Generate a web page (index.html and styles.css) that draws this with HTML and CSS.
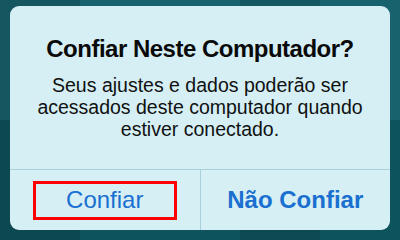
FILE: index.html
```html
<!DOCTYPE html>
<html>
<head>
<meta charset="utf-8">
<link rel="stylesheet" href="styles.css">
</head>
<body>
<div class="dialog">
  <div class="content">
    <div class="title">Confiar Neste Computador?</div>
    <div class="message">Seus ajustes e dados poderão ser acessados deste computador quando estiver conectado.</div>
  </div>
  <div class="buttons">
    <div class="btn"><span class="highlight">Confiar</span></div>
    <div class="btn bold">Não Confiar</div>
  </div>
</div>
</body>
</html>
```
FILE: styles.css
```css
html, body {
  margin: 0;
  width: 400px;
  height: 240px;
  overflow: hidden;
}
body {
  padding: 6px 10px 10px 10px;
  box-sizing: border-box;
  background:
    linear-gradient(90deg, rgba(0,0,0,0.12) 0 20%, transparent 20% 60%, rgba(0,0,0,0.1) 60% 80%, transparent 80%),
    linear-gradient(180deg, rgba(255,255,255,0.04) 0 50%, rgba(0,0,0,0.1) 50%),
    #0f5c67;
  font-family: "Liberation Sans", Arial, sans-serif;
}
.dialog {
  height: 224px;
  background: #d5eff5;
  border-radius: 9px;
  display: flex;
  flex-direction: column;
  overflow: hidden;
}
.content {
  height: 164px;
  box-sizing: border-box;
  padding-top: 28px;
  text-align: center;
  border-bottom: 1px solid #a8d2db;
}
.title {
  font-size: 24px;
  letter-spacing: -0.5px;
  font-weight: bold;
  color: #0a0a0a;
  line-height: 30px;
}
.message {
  margin-top: 10px;
  font-size: 19.5px;
  line-height: 22px;
  color: #111;
  padding: 0 10px;
}
.buttons {
  flex: 1;
  display: flex;
}
.btn {
  flex: 1;
  display: flex;
  align-items: center;
  justify-content: center;
  font-size: 24px;
  color: #1a6fd0;
}
.btn + .btn {
  border-left: 1px solid #a8d2db;
}
.bold {
  font-weight: bold;
}
.highlight {
  border: 3px solid #ff0000;
  width: 138px;
  height: 33px;
  display: flex;
  align-items: center;
  justify-content: center;
}
```
